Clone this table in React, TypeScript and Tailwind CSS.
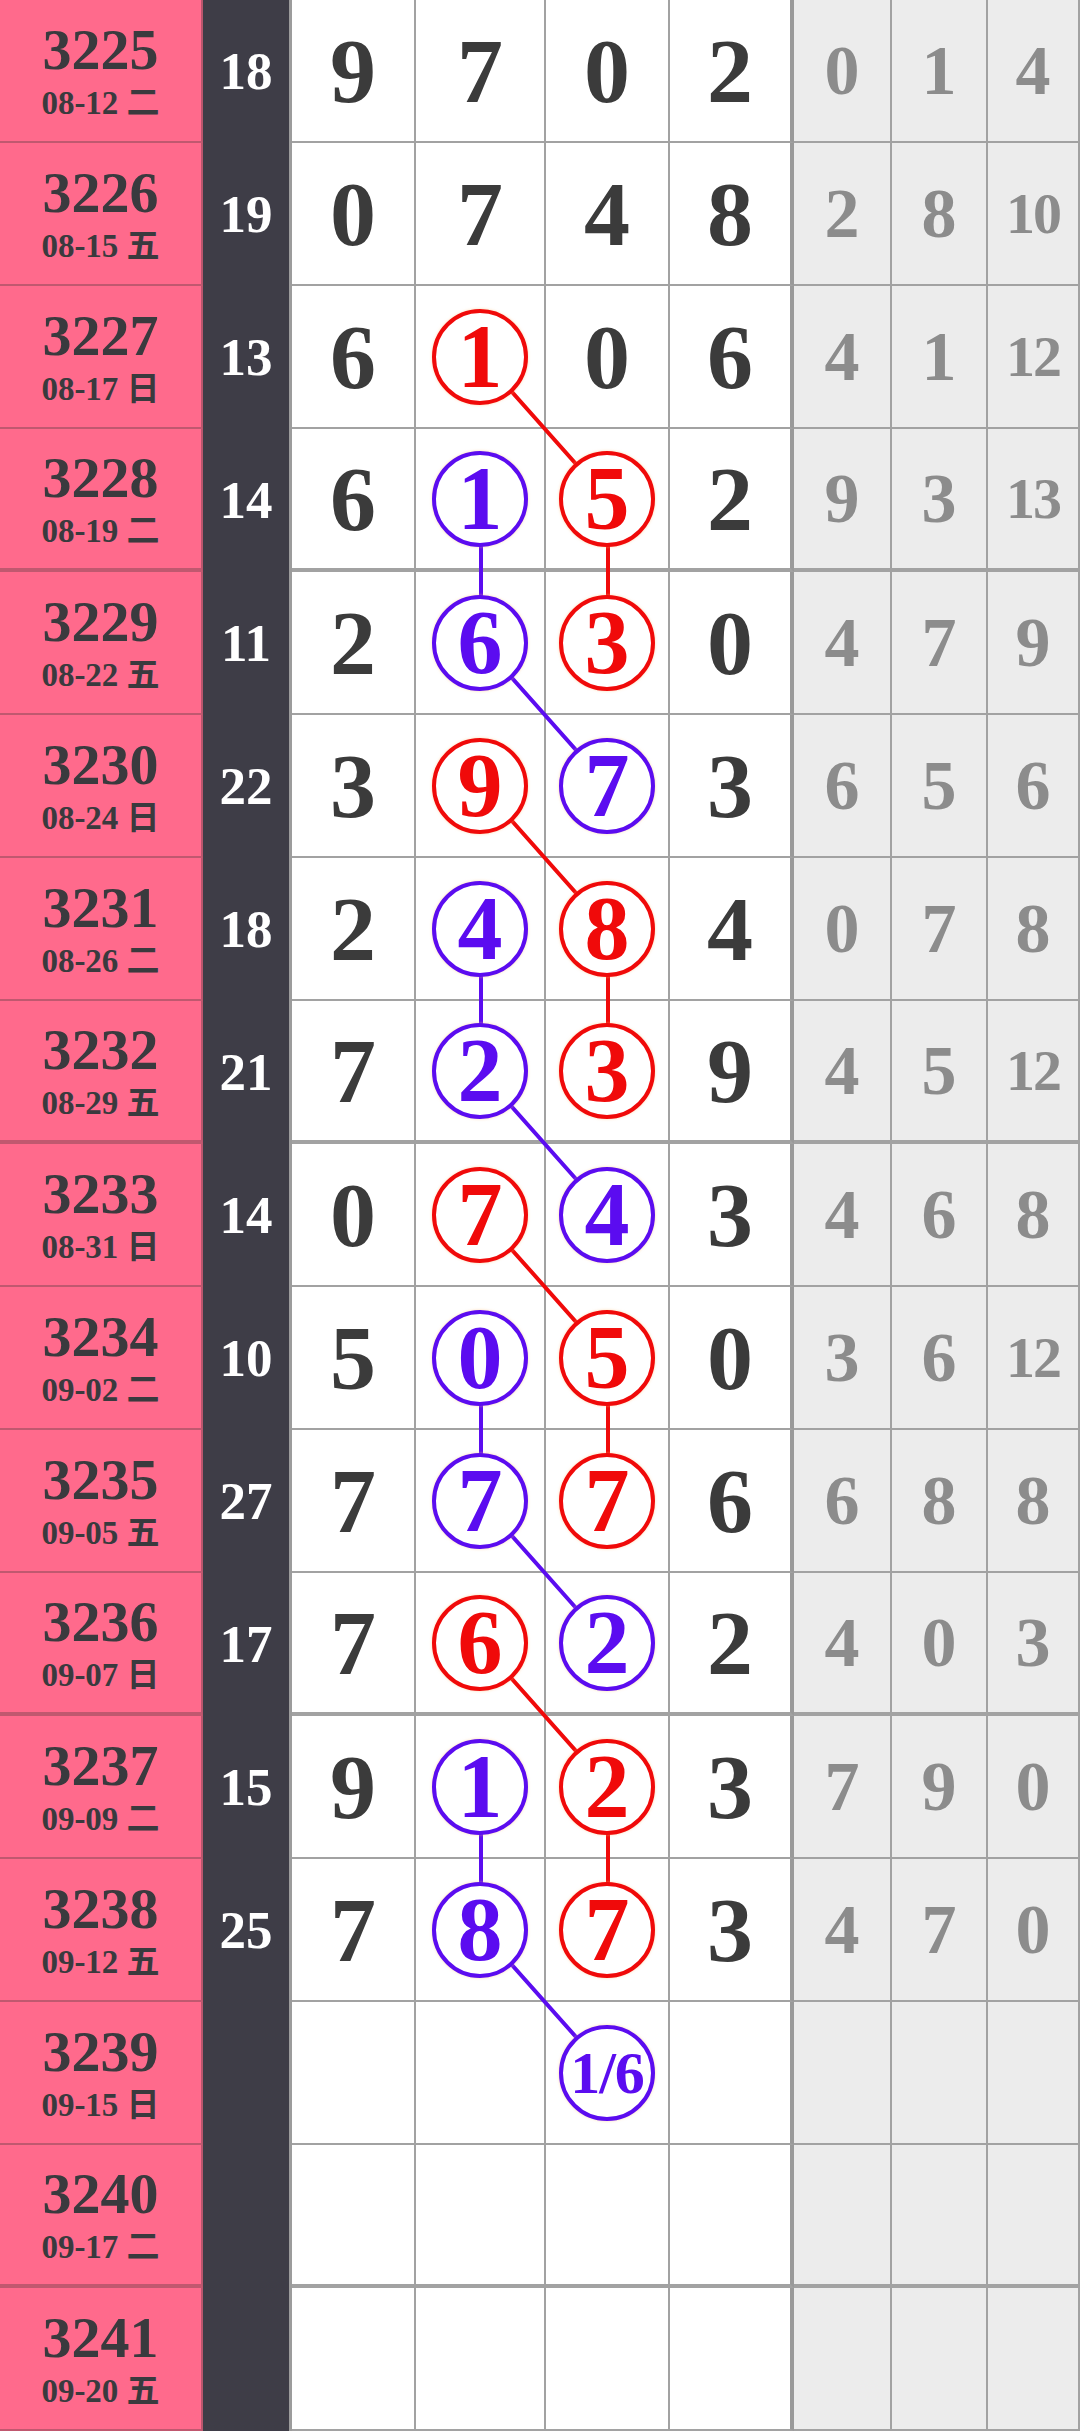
import React from "react";

type Row = { n: string; d: string; s?: number; v: string[]; g: number[] };

// "r" = red ring, "p" = purple ring
const rows: Row[] = [
  { n: "3225", d: "08-12 二", s: 18, v: ["9", "7", "0", "2"], g: [0, 1, 4] },
  { n: "3226", d: "08-15 五", s: 19, v: ["0", "7", "4", "8"], g: [2, 8, 10] },
  { n: "3227", d: "08-17 日", s: 13, v: ["6", "r1", "0", "6"], g: [4, 1, 12] },
  { n: "3228", d: "08-19 二", s: 14, v: ["6", "p1", "r5", "2"], g: [9, 3, 13] },
  { n: "3229", d: "08-22 五", s: 11, v: ["2", "p6", "r3", "0"], g: [4, 7, 9] },
  { n: "3230", d: "08-24 日", s: 22, v: ["3", "r9", "p7", "3"], g: [6, 5, 6] },
  { n: "3231", d: "08-26 二", s: 18, v: ["2", "p4", "r8", "4"], g: [0, 7, 8] },
  { n: "3232", d: "08-29 五", s: 21, v: ["7", "p2", "r3", "9"], g: [4, 5, 12] },
  { n: "3233", d: "08-31 日", s: 14, v: ["0", "r7", "p4", "3"], g: [4, 6, 8] },
  { n: "3234", d: "09-02 二", s: 10, v: ["5", "p0", "r5", "0"], g: [3, 6, 12] },
  { n: "3235", d: "09-05 五", s: 27, v: ["7", "p7", "r7", "6"], g: [6, 8, 8] },
  { n: "3236", d: "09-07 日", s: 17, v: ["7", "r6", "p2", "2"], g: [4, 0, 3] },
  { n: "3237", d: "09-09 二", s: 15, v: ["9", "p1", "r2", "3"], g: [7, 9, 0] },
  { n: "3238", d: "09-12 五", s: 25, v: ["7", "p8", "r7", "3"], g: [4, 7, 0] },
  { n: "3239", d: "09-15 日", v: ["", "", "p1/6", ""], g: [] },
  { n: "3240", d: "09-17 二", v: ["", "", "", ""], g: [] },
  { n: "3241", d: "09-20 五", v: ["", "", "", ""], g: [] },
];

const ROW_H = 143;
const COL_X = [0, 481, 608];
const pt = (r: number, c: number) => `${COL_X[c]},${r * ROW_H + 71}`;

const redRuns = [
  [[2, 1], [3, 2], [4, 2]],
  [[5, 1], [6, 2], [7, 2]],
  [[8, 1], [9, 2], [10, 2]],
  [[11, 1], [12, 2], [13, 2]],
];
const purpleRuns = [
  [[3, 1], [4, 1], [5, 2]],
  [[6, 1], [7, 1], [8, 2]],
  [[9, 1], [10, 1], [11, 2]],
  [[12, 1], [13, 1], [14, 2]],
];

const Ball = ({ text }: { text: string }) => {
  const red = text[0] === "r";
  const label = text.slice(1);
  return (
    <div
      className={`relative z-10 w-24 h-24 rounded-full border-4 bg-white flex items-center justify-center leading-none shadow-[0_0_3px_rgba(255,190,120,0.6)] ${
        red ? "border-[#f00a0a] text-[#f00a0a]" : "border-[#5b0cf0] text-[#5b0cf0]"
      } ${label.length > 1 ? "text-[60px] tracking-[-1px]" : "text-[90px]"}`}
    >
      {label}
    </div>
  );
};

export default function App() {
  return (
    <div className="w-[1080px] relative font-['Liberation_Serif','Noto_Sans_CJK_SC',serif] font-bold overflow-hidden">
      {rows.map((r, i) => {
        const groupEnd = i % 4 === 3;
        const bb = groupEnd ? "border-b-4" : "border-b-2";
        return (
          <div
            key={r.n}
            className="grid grid-cols-[203px_89px_124px_130px_124px_124px_98px_96px_92px] h-[143px]"
          >
            <div
              className={`bg-[#ff6a8c] border-r-2 border-r-[#b9566d] ${bb} border-b-[#c0586f] flex flex-col items-center justify-center gap-2 text-[#3a3a3e] leading-none`}
            >
              <span className="text-[58px]">{r.n}</span>
              <span className="text-[33px]">{r.d}</span>
            </div>
            <div className="bg-[#3e3d47] border-r-[3px] border-r-[#9c9c9c] flex items-center justify-center text-white text-[53px] leading-none">
              {r.s ?? ""}
            </div>
            {r.v.map((v, j) => (
              <div
                key={j}
                className={`bg-white ${bb} border-b-[#a2a2a2] ${
                  j === 3 ? "border-r-4 border-r-[#9a9a9a]" : "border-r-2 border-r-[#a2a2a2]"
                } flex items-center justify-center text-[#3b3b3b] text-[92px] leading-none`}
              >
                {v && (v[0] === "r" || v[0] === "p") ? <Ball text={v} /> : v}
              </div>
            ))}
            {[0, 1, 2].map((k) => {
              const g = r.g[k];
              const big = g !== undefined && g > 9;
              return (
                <div
                  key={k}
                  className={`bg-[#ececec] ${bb} border-b-[#a2a2a2] border-r-2 border-r-[#a2a2a2] flex items-center justify-center text-[#8c8c8c] leading-none ${
                    big ? "text-[58px] tracking-[-2px]" : "text-[70px]"
                  }`}
                >
                  {g ?? ""}
                </div>
              );
            })}
          </div>
        );
      })}
      <svg
        className="absolute inset-0 z-[5] pointer-events-none"
        width={1080}
        height={rows.length * ROW_H}
      >
        {redRuns.map((run, i) => (
          <polyline
            key={`r${i}`}
            points={run.map(([r, c]) => pt(r, c)).join(" ")}
            fill="none"
            stroke="#f00a0a"
            strokeWidth={4}
          />
        ))}
        {purpleRuns.map((run, i) => (
          <polyline
            key={`p${i}`}
            points={run.map(([r, c]) => pt(r, c)).join(" ")}
            fill="none"
            stroke="#5b0cf0"
            strokeWidth={4}
          />
        ))}
      </svg>
    </div>
  );
}
